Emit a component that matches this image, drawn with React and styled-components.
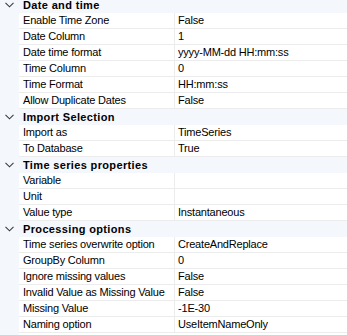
import React from 'react';
import styled, { createGlobalStyle } from 'styled-components';

const GUTTER = '#f4f7fc';
const LINE = '#ececec';

const GlobalStyle = createGlobalStyle`
  html, body {
    margin: 0;
    padding: 0;
    background: #fff;
    overflow: hidden;
  }
`;

const categories = [
  {
    title: 'Date and time',
    rows: [
      ['Enable Time Zone', 'False'],
      ['Date Column', '1'],
      ['Date time format', 'yyyy-MM-dd HH:mm:ss'],
      ['Time Column', '0'],
      ['Time Format', 'HH:mm:ss'],
      ['Allow Duplicate Dates', 'False'],
    ],
  },
  {
    title: 'Import Selection',
    rows: [
      ['Import as', 'TimeSeries'],
      ['To Database', 'True'],
    ],
  },
  {
    title: 'Time series properties',
    rows: [
      ['Variable', ''],
      ['Unit', ''],
      ['Value type', 'Instantaneous'],
    ],
  },
  {
    title: 'Processing options',
    rows: [
      ['Time series overwrite option', 'CreateAndReplace'],
      ['GroupBy Column', '0'],
      ['Ignore missing values', 'False'],
      ['Invalid Value as Missing Value', 'False'],
      ['Missing Value', '-1E-30'],
      ['Naming option', 'UseItemNameOnly'],
    ],
  },
];

const Grid = styled.div`
  margin-top: -3px;
  min-height: calc(100vh + 3px);
  background: linear-gradient(to right, ${GUTTER} 19px, #fff 19px);
  font-family: "Liberation Sans", Arial, sans-serif;
  font-size: 11px;
  color: #000;
`;

const Header = styled.div`
  display: flex;
  align-items: center;
  height: 16px;
  background: ${GUTTER};
`;

const Toggle = styled.span`
  display: flex;
  align-items: center;
  justify-content: center;
  width: 19px;
  height: 16px;
  color: #3c3c3c;
`;

const Title = styled.span`
  padding-left: 4px;
  font-weight: bold;
  letter-spacing: 0.35px;
  line-height: 16px;
`;

const Row = styled.div`
  display: grid;
  grid-template-columns: 19px 156px 1fr;
  height: 16px;
`;

const Cell = styled.div`
  box-sizing: border-box;
  height: 16px;
  line-height: 15px;
  border-bottom: 1px solid ${LINE};
  border-right: ${(p) => (p.$name ? `1px solid ${LINE}` : 'none')};
  padding-left: ${(p) => (p.$name ? '4px' : '3px')};
  background: #fff;
  white-space: nowrap;
  overflow: hidden;
  letter-spacing: -0.2px;
`;

const Chevron = () => (
  <svg width="9" height="6" viewBox="0 0 9 6" fill="none">
    <path d="M0.5 0.8 L4.5 4.8 L8.5 0.8" stroke="currentColor" strokeWidth="1.1" />
  </svg>
);

export default function App() {
  return (
    <>
      <GlobalStyle />
      <Grid>
        {categories.map((cat) => (
          <section key={cat.title}>
            <Header>
              <Toggle><Chevron /></Toggle>
              <Title>{cat.title}</Title>
            </Header>
            {cat.rows.map(([name, value]) => (
              <Row key={name}>
                <span />
                <Cell $name>{name}</Cell>
                <Cell>{value}</Cell>
              </Row>
            ))}
          </section>
        ))}
      </Grid>
    </>
  );
}
